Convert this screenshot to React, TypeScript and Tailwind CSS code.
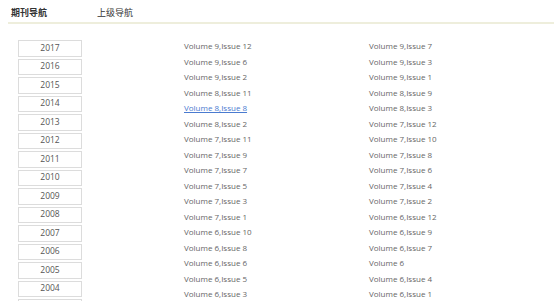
import React from 'react';

const years = [2017, 2016, 2015, 2014, 2013, 2012, 2011, 2010, 2009, 2008, 2007, 2006, 2005, 2004, 2003];

const issues: [string, string][] = [
  ['Volume 9,Issue 12', 'Volume 9,Issue 7'],
  ['Volume 9,Issue 6', 'Volume 9,Issue 3'],
  ['Volume 9,Issue 2', 'Volume 9,Issue 1'],
  ['Volume 8,Issue 11', 'Volume 8,Issue 9'],
  ['Volume 8,Issue 8', 'Volume 8,Issue 3'],
  ['Volume 8,Issue 2', 'Volume 7,Issue 12'],
  ['Volume 7,Issue 11', 'Volume 7,Issue 10'],
  ['Volume 7,Issue 9', 'Volume 7,Issue 8'],
  ['Volume 7,Issue 7', 'Volume 7,Issue 6'],
  ['Volume 7,Issue 5', 'Volume 7,Issue 4'],
  ['Volume 7,Issue 3', 'Volume 7,Issue 2'],
  ['Volume 7,Issue 1', 'Volume 6,Issue 12'],
  ['Volume 6,Issue 10', 'Volume 6,Issue 9'],
  ['Volume 6,Issue 8', 'Volume 6,Issue 7'],
  ['Volume 6,Issue 6', 'Volume 6'],
  ['Volume 6,Issue 5', 'Volume 6,Issue 4'],
  ['Volume 6,Issue 3', 'Volume 6,Issue 1'],
];

const IssueLink = ({ label, active }: { label: string; active?: boolean }) => (
  <a
    href="#"
    className={`block w-[185px] h-[15.5px] leading-[15.5px] ${active ? 'text-[#4a7bd0] underline' : 'text-[#666]'}`}
  >
    {label}
  </a>
);

export default function App() {
  return (
    <div className="w-[554px] h-[301px] overflow-hidden bg-white font-['Open_Sans','Noto_Sans_CJK_SC',sans-serif]">
      {/* tabs */}
      <div className="flex items-end h-[22px] pl-[11px] pb-[3px] text-[9px] text-[#333]">
        <span className="font-bold w-[86px]">期刊导航</span>
        <span>上级导航</span>
      </div>
      <div className="ml-[8px] h-[2px] bg-[#eeeedc]" />

      <div className="flex pt-[16px]">
        {/* year list */}
        <div className="ml-[18px] w-[74px] flex flex-col gap-[2px]">
          {years.map((y) => (
            <div
              key={y}
              className="h-[16.5px] border border-[#dcdcdc] flex items-center justify-center text-[8.5px] text-[#555]"
            >
              {y}
            </div>
          ))}
        </div>

        {/* issues */}
        <div className="ml-[102px] -mt-[2px] text-[8px]">
          {issues.map(([a, b], i) => (
            <div key={i} className="flex">
              <IssueLink label={a} active={a === 'Volume 8,Issue 8'} />
              <IssueLink label={b} />
            </div>
          ))}
        </div>
      </div>
    </div>
  );
}
